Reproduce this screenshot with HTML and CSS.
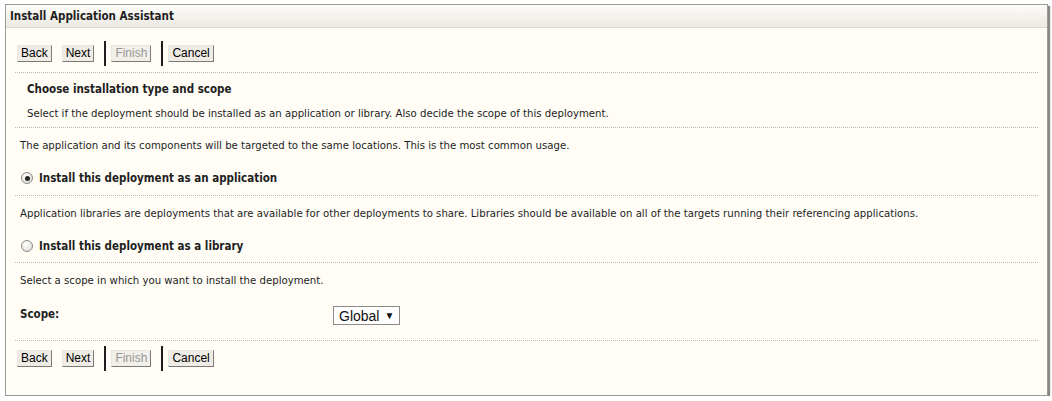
FILE: index.html
```html
<!DOCTYPE html>
<html lang="en">
<head>
  <meta charset="UTF-8">
  <title>Install Application Assistant</title>
  <link rel="stylesheet" href="styles.css">
</head>
<body>
  <div class="panel">
    <div class="title-bar">Install Application Assistant</div>
    <div class="content">
      <div class="button-bar top">
        <button class="btn">Back</button>
        <button class="btn">Next</button>
        <span class="sep"></span>
        <button class="btn" disabled>Finish</button>
        <span class="sep"></span>
        <button class="btn">Cancel</button>
      </div>

      <div class="section intro">
        <h2>Choose installation type and scope</h2>
        <p>Select if the deployment should be installed as an application or library. Also decide the scope of this deployment.</p>
      </div>

      <div class="section">
        <p>The application and its components will be targeted to the same locations. This is the most common usage.</p>
        <label class="choice">
          <span class="radio checked"></span>
          Install this deployment as an application
        </label>
      </div>

      <div class="section library">
        <p>Application libraries are deployments that are available for other deployments to share. Libraries should be available on all of the targets running their referencing applications.</p>
        <label class="choice">
          <span class="radio"></span>
          Install this deployment as a library
        </label>
      </div>

      <div class="section scope-section">
        <p>Select a scope in which you want to install the deployment.</p>
        <div class="scope-row">
          <span class="scope-label">Scope:</span>
          <span class="select">Global <span class="arrow">&#9660;</span></span>
        </div>
      </div>

      <div class="button-bar bottom">
        <button class="btn">Back</button>
        <button class="btn">Next</button>
        <span class="sep"></span>
        <button class="btn" disabled>Finish</button>
        <span class="sep"></span>
        <button class="btn">Cancel</button>
      </div>
    </div>
  </div>
</body>
</html>
```

FILE: styles.css
```css
body {
  margin: 0;
  padding: 0;
  background: #ffffff;
  font-family: "DejaVu Sans Condensed", "DejaVu Sans", sans-serif;
  font-size: 11.3px;
  color: #1e1e1e;
}
.panel {
  margin: 4px 4px 0 5px;
  height: 390px;
  border: 1px solid #9c9a96;
  background: #fffdf6;
  box-shadow: 2px 2px 1px #8a8885;
}
.title-bar {
  height: 22px;
  line-height: 22px;
  padding-left: 4px;
  font-weight: bold;
  font-size: 11.5px;
  background: linear-gradient(#fdfcf9, #ece9e2);
  border-bottom: 1px solid #dcd8d0;
}
.content {
  padding: 0 9px 0 9px;
}
.button-bar {
  display: flex;
  align-items: center;
  height: 25px;
  padding-left: 2px;
}
.button-bar.top {
  padding-top: 13px;
  padding-bottom: 6px;
}
.button-bar.bottom {
  padding-top: 5px;
  border-top: 1px dotted #b9b6b0;
}
.btn {
  font-family: "Liberation Sans", Arial, sans-serif;
  font-size: 12px;
  height: 17px;
  padding: 0 3px;
  margin: 0 10px 0 0;
  color: #000;
  background: #efece6;
  border: 1px solid;
  border-color: #e8e6e2 #7c7a76 #7c7a76 #e8e6e2;
  border-radius: 0;
  line-height: 15px;
}
.btn:disabled {
  color: #9a9894;
  background: #f1efea;
}
.sep {
  width: 2px;
  height: 25px;
  background: #1d1d1d;
  margin: 0 5px 0 0;
}
.section {
  border-top: 1px dotted #b9b6b0;
  padding: 10px 0 9px 5px;
}
.section p {
  margin: 0;
  line-height: 16px;
}
.intro {
  padding: 8px 0 5px 12px;
}
.intro h2 {
  margin: 0;
  font-size: 11.5px;
  line-height: 16px;
  padding-bottom: 9px;
}
.library {
  padding-bottom: 8px;
}
.choice {
  display: flex;
  align-items: center;
  margin-top: 16px;
  height: 16px;
  font-weight: bold;
  font-size: 11.5px;
}
.radio {
  width: 10px;
  height: 10px;
  border: 1px solid #8e8c88;
  border-radius: 50%;
  background: radial-gradient(circle at 40% 35%, #ffffff, #d8d6d2);
  margin: 0 6px 0 1px;
  position: relative;
}
.radio.checked::after {
  content: "";
  position: absolute;
  left: 2.5px;
  top: 2.5px;
  width: 5px;
  height: 5px;
  border-radius: 50%;
  background: #262626;
}
.scope-section {
  padding-bottom: 15px;
}
.scope-row {
  display: flex;
  align-items: center;
  margin-top: 14px;
  height: 22px;
}
.scope-label {
  width: 313px;
  font-weight: bold;
  font-size: 11.5px;
}
.select {
  display: inline-flex;
  align-items: center;
  height: 17px;
  margin-top: 3px;
  padding: 0 5px;
  border: 1px solid #8c8a86;
  background: #ffffff;
  font-family: "Liberation Sans", Arial, sans-serif;
  font-size: 14px;
  color: #111;
}
.select .arrow {
  font-size: 10px;
  margin-left: 5px;
}
```
